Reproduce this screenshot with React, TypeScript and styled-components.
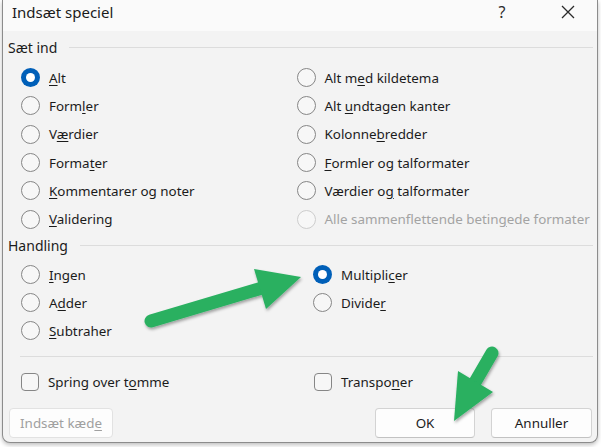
import React from 'react';
import styled, { createGlobalStyle } from 'styled-components';

const GlobalStyle = createGlobalStyle`
  html, body {
    margin: 0;
    padding: 0;
    background: #ffffff;
  }
  body {
    font-family: "Noto Sans", "Open Sans", sans-serif;
    color: #1b1b1b;
  }
`;

const Page = styled.div`
  position: relative;
  width: 601px;
  height: 447px;
  overflow: hidden;
`;

const Dialog = styled.div`
  width: 594px;
  height: 442px;
  margin-left: 2px;
  background: #f3f3f3;
  border: 1px solid #8c8c8c;
  border-top: none;
  border-radius: 0 0 8px 8px;
  box-shadow: 0 2px 4px rgba(0, 0, 0, 0.25);
  display: flex;
  flex-direction: column;
`;

const TitleBar = styled.div`
  height: 31px;
  flex: none;
  background: #fafafa;
  display: flex;
  align-items: center;
  padding-left: 9px;
  padding-bottom: 7px;
  box-sizing: border-box;
  font-size: 15px;
`;

const Title = styled.div`
  flex: 1;
`;

const TitleButton = styled.div`
  width: 40px;
  display: flex;
  justify-content: center;
  align-items: center;
  font-size: 16px;
  color: #2a2a2a;
`;

const Body = styled.div`
  flex: 1;
  display: flex;
  flex-direction: column;
  padding: 0 4px 0 5px;
`;

const GroupHeader = styled.div<{ $top: number }>`
  display: flex;
  align-items: center;
  gap: 12px;
  height: 20px;
  margin-top: ${(p) => p.$top}px;
  font-size: 14px;
`;

const GroupLine = styled.div`
  flex: 1;
  height: 1px;
  background: #dcdcdc;
`;

const OptionGrid = styled.div<{ $top: number; $col: number; $row: number; $rows: number }>`
  display: grid;
  grid-template-columns: ${(p) => p.$col}px 1fr;
  grid-template-rows: repeat(${(p) => p.$rows}, ${(p) => p.$row}px);
  grid-auto-flow: column;
  margin-top: ${(p) => p.$top}px;
  margin-left: 13px;
`;

const Option = styled.label<{ $disabled?: boolean }>`
  display: flex;
  align-items: center;
  gap: 9px;
  font-size: 13.4px;
  color: ${(p) => (p.$disabled ? '#a3a3a3' : '#1b1b1b')};
  white-space: nowrap;

  u {
    text-underline-offset: 2px;
  }
`;

const Radio = styled.span<{ $checked?: boolean; $disabled?: boolean }>`
  width: 19px;
  height: 19px;
  flex: none;
  box-sizing: border-box;
  border-radius: 50%;
  position: relative;
  background: ${(p) => (p.$checked ? '#005fb8' : '#f7f7f7')};
  border: ${(p) =>
    p.$checked ? 'none' : `1px solid ${p.$disabled ? '#cdcdcd' : '#868686'}`};

  &::after {
    content: '';
    display: ${(p) => (p.$checked ? 'block' : 'none')};
    position: absolute;
    left: 5px;
    top: 5px;
    width: 9px;
    height: 9px;
    border-radius: 50%;
    background: #ffffff;
  }
`;

const Separator = styled.div`
  height: 1px;
  background: #dcdcdc;
  margin: 11px 0 0 12px;
`;

const CheckRow = styled.div`
  display: grid;
  grid-template-columns: 293px 1fr;
  height: 28px;
  margin-top: 11px;
  margin-left: 13px;
`;

const Checkbox = styled.span`
  width: 18px;
  height: 18px;
  flex: none;
  box-sizing: border-box;
  border: 1px solid #868686;
  border-radius: 4px;
  background: #f7f7f7;
`;

const ButtonRow = styled.div`
  display: flex;
  align-items: center;
  margin-top: 12px;
  padding-left: 1px;
`;

const Button = styled.button<{ $width: number; $disabled?: boolean; $gap?: number }>`
  width: ${(p) => p.$width}px;
  height: 30px;
  margin-left: ${(p) => p.$gap ?? 0}px;
  box-sizing: border-box;
  background: #fdfdfd;
  border: 1px solid ${(p) => (p.$disabled ? '#e2e2e2' : '#d3d3d3')};
  border-bottom-color: ${(p) => (p.$disabled ? '#e2e2e2' : '#c2c2c2')};
  border-radius: 4px;
  font-family: inherit;
  font-size: 13.4px;
  color: ${(p) => (p.$disabled ? '#a0a0a0' : '#1b1b1b')};
  padding: 0;

  u {
    text-underline-offset: 2px;
  }
`;

const Spacer = styled.div`
  flex: 1;
`;

const ArrowLayer = styled.svg`
  position: absolute;
  left: 0;
  top: 0;
  pointer-events: none;
`;

type Opt = { label: React.ReactNode; checked?: boolean; disabled?: boolean };

const k = (before: string, key: string, after: string) => (
  <>
    {before}
    <u>{key}</u>
    {after}
  </>
);

const pasteOptions: Opt[] = [
  { label: k('', 'A', 'lt'), checked: true },
  { label: k('Form', 'l', 'er') },
  { label: k('V', 'æ', 'rdier') },
  { label: k('Forma', 't', 'er') },
  { label: k('', 'K', 'ommentarer og noter') },
  { label: k('', 'V', 'alidering') },
  { label: k('Alt m', 'e', 'd kildetema') },
  { label: k('Alt ', 'u', 'ndtagen kanter') },
  { label: k('Kolonne', 'b', 'redder') },
  { label: k('', 'F', 'ormler og talformater') },
  { label: k('Værdier o', 'g', ' talformater') },
  { label: k('Alle sammenflettende betin', 'g', 'ede formater'), disabled: true },
];

const operationOptions: Opt[] = [
  { label: k('', 'I', 'ngen') },
  { label: k('A', 'd', 'der') },
  { label: k('', 'S', 'ubtraher') },
  { label: k('Multipli', 'c', 'er'), checked: true },
  { label: k('Divide', 'r', '') },
];

const RadioOption = ({ opt }: { opt: Opt }) => (
  <Option $disabled={opt.disabled}>
    <Radio $checked={opt.checked} $disabled={opt.disabled} />
    <span>{opt.label}</span>
  </Option>
);

const Arrows = () => (
  <ArrowLayer width={601} height={447} viewBox="0 0 601 447">
    <defs>
      <filter id="shadow" x="-20%" y="-20%" width="140%" height="140%">
        <feDropShadow dx="1" dy="2" stdDeviation="1.6" floodColor="#000" floodOpacity="0.35" />
      </filter>
    </defs>
    <g filter="url(#shadow)" fill="#29b061" stroke="#29b061">
      <line x1={151} y1={321} x2={262} y2={288} strokeWidth={13} strokeLinecap="round" />
      <polygon points="254,269 301,277 266,309" stroke="none" />
      <line x1={492} y1={353} x2={474} y2={384} strokeWidth={13} strokeLinecap="round" />
      <polygon points="458,371 493,392 454,421" stroke="none" />
    </g>
  </ArrowLayer>
);

const App = () => {
  return (
    <Page>
      <GlobalStyle />
      <Dialog>
        <TitleBar>
          <Title>Indsæt speciel</Title>
          <TitleButton>?</TitleButton>
          <TitleButton style={{ marginLeft: 26, marginRight: 9 }}>
            <svg width="14" height="14" viewBox="0 0 14 14">
              <path d="M1 1 L13 13 M13 1 L1 13" stroke="#2a2a2a" strokeWidth="1.3" />
            </svg>
          </TitleButton>
        </TitleBar>
        <Body>
          <GroupHeader $top={6}>
            <span>Sæt ind</span>
            <GroupLine />
          </GroupHeader>
          <OptionGrid $top={6.5} $col={275.5} $row={28.3} $rows={6}>
            {pasteOptions.map((o, i) => (
              <RadioOption key={i} opt={o} />
            ))}
          </OptionGrid>
          <GroupHeader $top={2.7}>
            <span>Handling</span>
            <GroupLine />
          </GroupHeader>
          <OptionGrid $top={5} $col={292} $row={28} $rows={3}>
            {operationOptions.map((o, i) => (
              <RadioOption key={i} opt={o} />
            ))}
          </OptionGrid>
          <Separator />
          <CheckRow>
            <Option>
              <Checkbox />
              <span>{k('Spring over t', 'o', 'mme')}</span>
            </Option>
            <Option>
              <Checkbox />
              <span>{k('Transpo', 'n', 'er')}</span>
            </Option>
          </CheckRow>
          <ButtonRow>
            <Button $width={104} $disabled>
              {k('Indsæt kæd', 'e', '')}
            </Button>
            <Spacer />
            <Button $width={100}>OK</Button>
            <Button $width={101} $gap={16} style={{ marginRight: 1 }}>
              Annuller
            </Button>
          </ButtonRow>
        </Body>
      </Dialog>
      <Arrows />
    </Page>
  );
};

export default App;
